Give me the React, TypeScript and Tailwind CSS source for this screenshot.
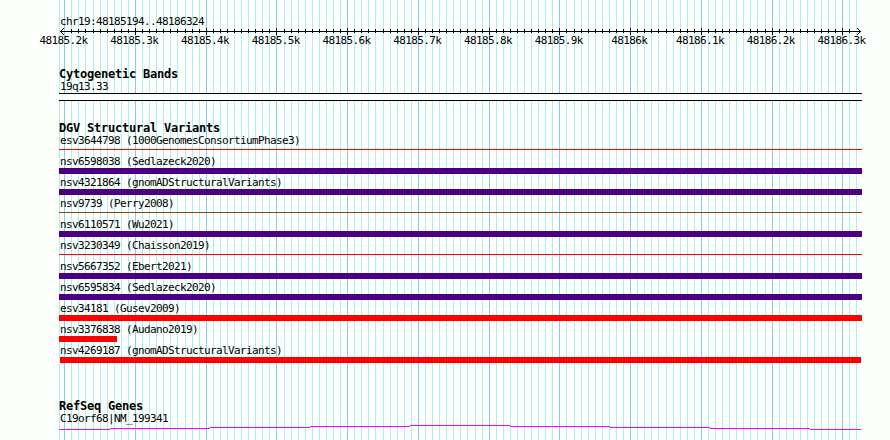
const PLOT_LEFT = 59;
const PLOT_WIDTH = 803;
const ORIGIN = 64.76;
const STEP = 7.0735;

const gridLines = Array.from({ length: 113 }, (_, i) => ({
  x: Math.floor(ORIGIN + STEP * i) - PLOT_LEFT,
  major: i % 10 === 0,
}));

// The arrow heads take the place of the outermost ticks
const rulerTicks = gridLines.slice(1, -1);

const labels = [
  "48185.2k",
  "48185.3k",
  "48185.4k",
  "48185.5k",
  "48185.6k",
  "48185.7k",
  "48185.8k",
  "48185.9k",
  "48186k",
  "48186.1k",
  "48186.2k",
  "48186.3k",
];

const variants = [
  { name: "esv3644798 (1000GenomesConsortiumPhase3)", bar: "mt-0.5 h-px bg-[#ff0000]" },
  { name: "nsv6598038 (Sedlazeck2020)", bar: "h-1.5 bg-[#4b0082]" },
  { name: "nsv4321864 (gnomADStructuralVariants)", bar: "h-1.5 bg-[#4b0082]" },
  { name: "nsv9739 (Perry2008)", bar: "mt-0.5 h-px bg-[#8b4513]" },
  { name: "nsv6110571 (Wu2021)", bar: "h-1.5 bg-[#4b0082]" },
  { name: "nsv3230349 (Chaisson2019)", bar: "mt-0.5 h-px bg-[#ff0000]" },
  { name: "nsv5667352 (Ebert2021)", bar: "h-1.5 bg-[#4b0082]" },
  { name: "nsv6595834 (Sedlazeck2020)", bar: "h-1.5 bg-[#4b0082]" },
  { name: "esv34181 (Gusev2009)", bar: "h-1.5 bg-[#ff0000]" },
  { name: "nsv3376838 (Audano2019)", bar: "h-1.5 w-[58px] bg-[#ff0000]" },
  { name: "nsv4269187 (gnomADStructuralVariants)", bar: "mx-px h-1.5 bg-[#ff0000]" },
];

// Steps of the gene's line: start, end, height below the top of the plot
const geneSteps = [
  [0, 51, 4],
  [51, 151, 3],
  [151, 251, 2],
  [251, 351, 1],
  [351, 451, 0],
  [451, 551, 1],
  [551, 651, 2],
  [651, 751, 3],
  [751, 802, 4],
];

function Grid() {
  return (
    <svg className="absolute inset-y-0 left-[59px]" width={PLOT_WIDTH} height="440" shapeRendering="crispEdges">
      <rect x="0" y="0" width="1" height="440" fill="#afeeee" />
      {gridLines.map((t) => (
        <rect key={t.x} x={t.x} y="0" width="1" height="440" fill={t.major ? "#87ceeb" : "#afeeee"} />
      ))}
    </svg>
  );
}

function Ruler() {
  return (
    <div>
      <svg className="block" width={PLOT_WIDTH} height="7" shapeRendering="crispEdges">
        <rect x="1" y="3" width="801" height="1" />
        {rulerTicks.map((t) => (
          <rect key={t.x} x={t.x} y={t.major ? 0 : 1} width="1" height={t.major ? 7 : 4} />
        ))}
        {[1, 2, 3].map((d) => (
          <g key={d}>
            <rect x={1 + d} y={3 - d} width="1" height="1" />
            <rect x={1 + d} y={3 + d} width="1" height="1" />
            <rect x={801 - d} y={3 - d} width="1" height="1" />
            <rect x={801 - d} y={3 + d} width="1" height="1" />
          </g>
        ))}
      </svg>
      <div className="-ml-[30.5px] flex h-3">
        {labels.map((label) => (
          <div key={label} className="w-[70.74px] shrink-0">
            <div className="w-[70px] text-center">{label}</div>
          </div>
        ))}
      </div>
    </div>
  );
}

function Title({ children }: { children: string }) {
  return <h2 className="h-3 text-[12px] leading-3 font-bold tracking-[-0.225px]">{children}</h2>;
}

function Caption({ children }: { children: string }) {
  return <div className="h-[13px] pt-px pl-px">{children}</div>;
}

export default function App() {
  return (
    <div className="relative h-[440px] w-[890px] overflow-hidden bg-[#fdfffc] font-['DejaVu_Sans_Mono',monospace] text-[11px] leading-3 tracking-[-0.622px] whitespace-pre text-black">
      <Grid />
      <main className="relative ml-[59px] w-[803px] pt-[15px]">
        <Caption>chr19:48185194..48186324</Caption>
        <Ruler />

        <section className="mt-[21px]">
          <Title>Cytogenetic Bands</Title>
          <Caption>19q13.33</Caption>
          <div className="h-2 border-y border-black bg-[#fdfffc]" />
        </section>

        <section className="mt-[21px]">
          <Title>DGV Structural Variants</Title>
          {variants.map((v) => (
            <div key={v.name} className="h-[21px]">
              <Caption>{v.name}</Caption>
              <div className="flow-root">
                <div className={v.bar} />
              </div>
            </div>
          ))}
        </section>

        <section className="mt-[35px]">
          <Title>RefSeq Genes</Title>
          <Caption>C19orf68|NM_199341</Caption>
          <svg className="block" width={PLOT_WIDTH} height="5" shapeRendering="crispEdges">
            {geneSteps.map(([start, end, y]) => (
              <rect key={start} x={start} y={y} width={end - start} height="1" fill="#ff00ff" />
            ))}
          </svg>
        </section>
      </main>
    </div>
  );
}
